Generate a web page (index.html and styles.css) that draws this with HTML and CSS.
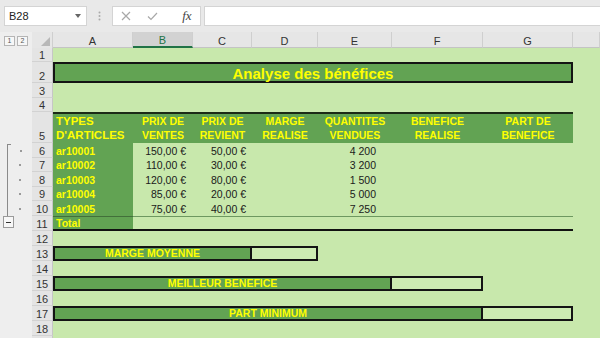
FILE: index.html
```html
<!DOCTYPE html>
<html lang="fr">
<head>
    <meta charset="UTF-8">
    <meta name="viewport" content="width=device-width, initial-scale=1.0">
    <title>Analyse des bénéfices</title>
    <link rel="stylesheet" href="styles.css">
</head>
<body>

    <div class="toolbar">
        <div class="namebox">
            <span>B28</span>
            <svg class="caret" width="6" height="4" viewBox="0 0 6 4"><path d="M0 0h6L3 4z" fill="#666"/></svg>
        </div>
        <div class="grip">
            <svg width="3" height="10" viewBox="0 0 3 10"><circle cx="1.5" cy="1.5" r="1" fill="#aaa"/><circle cx="1.5" cy="5" r="1" fill="#aaa"/><circle cx="1.5" cy="8.5" r="1" fill="#aaa"/></svg>
        </div>
        <div class="fbtns">
            <div class="slot"><svg width="10" height="10" viewBox="0 0 10 10"><path d="M1 1l8 8M9 1l-8 8" stroke="#a8a8a8" stroke-width="1.2"/></svg></div>
            <div class="slot"><svg width="11" height="9" viewBox="0 0 11 9"><path d="M1 4.5l3 3L10 1" stroke="#a8a8a8" stroke-width="1.2" fill="none"/></svg></div>
            <div class="slot fx">fx</div>
        </div>
        <div class="finput"></div>
    </div>

    <div class="sheet">
        <div class="row colhdr">
            <div class="levels"><span class="lvl">1</span><span class="lvl">2</span></div>
            <div class="corner"><span class="tri"></span></div>
            <div class="ch">A</div>
            <div class="ch sel">B</div>
            <div class="ch">C</div>
            <div class="ch">D</div>
            <div class="ch">E</div>
            <div class="ch">F</div>
            <div class="ch">G</div>
            <div class="ch"></div>
        </div>

        <div class="row h14"><div class="ol"></div><div class="rh">1</div></div>
        <div class="row h21">
            <div class="ol"></div><div class="rh">2</div>
            <div class="title">Analyse des bénéfices</div>
        </div>
        <div class="row h15"><div class="ol"></div><div class="rh">3</div></div>
        <div class="row h14"><div class="ol"></div><div class="rh">4</div></div>

        <div class="row h31">
            <div class="ol"></div><div class="rh">5</div>
            <div class="hd first">TYPES<br>D'ARTICLES</div>
            <div class="hd">PRIX DE<br>VENTES</div>
            <div class="hd">PRIX DE<br>REVIENT</div>
            <div class="hd">MARGE<br>REALISE</div>
            <div class="hd">QUANTITES<br>VENDUES</div>
            <div class="hd">BENEFICE<br>REALISE</div>
            <div class="hd">PART DE<br>BENEFICE</div>
        </div>

        <div class="row h15">
            <div class="ol grp"><span class="tick"></span><span class="dot"></span></div><div class="rh">6</div>
            <div class="code">ar10001</div><div class="num pb">150,00&nbsp;€</div><div class="num pc">50,00&nbsp;€</div><div></div><div class="num pe">4&nbsp;200</div>
        </div>
        <div class="row h14">
            <div class="ol grp"><span class="line"></span><span class="dot"></span></div><div class="rh">7</div>
            <div class="code">ar10002</div><div class="num pb">110,00&nbsp;€</div><div class="num pc">30,00&nbsp;€</div><div></div><div class="num pe">3&nbsp;200</div>
        </div>
        <div class="row h15">
            <div class="ol grp"><span class="line"></span><span class="dot"></span></div><div class="rh">8</div>
            <div class="code">ar10003</div><div class="num pb">120,00&nbsp;€</div><div class="num pc">80,00&nbsp;€</div><div></div><div class="num pe">1&nbsp;500</div>
        </div>
        <div class="row h14">
            <div class="ol grp"><span class="line"></span><span class="dot"></span></div><div class="rh">9</div>
            <div class="code">ar10004</div><div class="num pb">85,00&nbsp;€</div><div class="num pc">20,00&nbsp;€</div><div></div><div class="num pe">5&nbsp;000</div>
        </div>
        <div class="row h15">
            <div class="ol grp"><span class="line"></span><span class="dot"></span></div><div class="rh">10</div>
            <div class="code">ar10005</div><div class="num pb">75,00&nbsp;€</div><div class="num pc">40,00&nbsp;€</div><div></div><div class="num pe">7&nbsp;250</div>
        </div>
        <div class="row h15">
            <div class="ol"><span class="minus"></span></div><div class="rh">11</div>
            <div class="code total">Total</div>
            <div class="totrest"></div>
        </div>
        <div class="row h15"><div class="ol"></div><div class="rh">12</div></div>

        <div class="row h15">
            <div class="ol"></div><div class="rh">13</div>
            <div class="label span-ac">MARGE MOYENNE</div>
            <div class="box"></div>
        </div>
        <div class="row h15"><div class="ol"></div><div class="rh">14</div></div>
        <div class="row h15">
            <div class="ol"></div><div class="rh">15</div>
            <div class="label span-ae">MEILLEUR BENEFICE</div>
            <div class="box"></div>
        </div>
        <div class="row h15"><div class="ol"></div><div class="rh">16</div></div>
        <div class="row h15">
            <div class="ol"></div><div class="rh">17</div>
            <div class="label span-af">PART MINIMUM</div>
            <div class="box"></div>
        </div>
        <div class="row h15"><div class="ol"></div><div class="rh">18</div></div>
        <div class="row h15"><div class="ol"></div><div class="rh"></div></div>
    </div>

</body>
</html>
```

FILE: styles.css
```css
body {
    margin: 0;
    width: 600px;
    height: 338px;
    overflow: hidden;
    font-family: 'Liberation Sans', Arial, sans-serif;
    background-color: #c8e8ac;
}

/* formula bar */
.toolbar {
    display: flex;
    height: 32px;
    box-sizing: border-box;
    padding: 6px 0 0 4px;
    background-color: #e9e9e9;
}
.namebox {
    display: flex;
    align-items: center;
    justify-content: space-between;
    width: 83px;
    height: 20px;
    box-sizing: border-box;
    padding: 0 5px 0 4px;
    background-color: white;
    border: 1px solid #d4d4d4;
    font-size: 11px;
    color: #222;
}
.grip {
    display: flex;
    justify-content: center;
    align-items: center;
    width: 25px;
    height: 20px;
}
.fbtns {
    display: flex;
    width: 89px;
    height: 20px;
    box-sizing: border-box;
    background-color: white;
    border: 1px solid #d4d4d4;
    margin-right: 3px;
}
.slot {
    display: flex;
    align-items: center;
    justify-content: center;
    width: 28px;
}
.fx {
    padding-left: 8px;
    font-family: 'Liberation Serif', serif;
    font-style: italic;
    font-size: 13px;
    color: #444;
}
.finput {
    flex: 1;
    height: 20px;
    box-sizing: border-box;
    background-color: white;
    border: 1px solid #d4d4d4;
    border-right: none;
}

/* grid */
.row {
    display: grid;
    grid-template-columns: 32px 21px 80px 60px 59px 66px 74px 91px 90px 1fr;
}
.h14 { height: 14px; }
.h15 { height: 15px; }
.h21 { height: 21px; }
.h31 { height: 31px; }

.colhdr {
    height: 16px;
    background-color: #e6e6e6;
    font-size: 11px;
    color: #333;
}
.levels {
    display: flex;
    gap: 2px;
    padding: 4px 0 0 4px;
    background-color: #eeeeee;
}
.lvl {
    width: 11px;
    height: 10px;
    box-sizing: border-box;
    border: 1px solid #b5b5b5;
    background-color: #f7f7f7;
    font-size: 7px;
    line-height: 8px;
    text-align: center;
    color: #555;
}
.corner {
    display: flex;
    justify-content: flex-end;
    align-items: flex-end;
    padding: 0 2px 2px 0;
    border-right: 1px solid #cfcfcf;
}
.tri {
    width: 0;
    height: 0;
    border-left: 9px solid transparent;
    border-bottom: 9px solid #b8b8b8;
}
.ch {
    display: flex;
    justify-content: center;
    align-items: flex-end;
    line-height: 12px;
    border-right: 1px solid #cfcfcf;
    border-bottom: 1px solid #c4c4c4;
}
.ch.sel {
    background-color: #d2d2d2;
    color: #217346;
    border-bottom: 2px solid #217346;
}

.ol {
    display: flex;
    align-items: stretch;
    background-color: #eeeeee;
}
.rh {
    display: flex;
    justify-content: center;
    align-items: flex-end;
    line-height: 12px;
    font-size: 11px;
    color: #333;
    background-color: #e4e4e4;
    border-bottom: 1px solid #d2d2d2;
    border-right: 1px solid #c6c6c6;
    box-sizing: border-box;
}

/* outline group */
.line {
    width: 1px;
    margin-left: 7px;
    background-color: #8a8a8a;
}
.tick {
    width: 3px;
    margin: 1px 0 0 7px;
    border-left: 1px solid #8a8a8a;
    border-top: 1px solid #8a8a8a;
}
.dot {
    width: 2px;
    height: 2px;
    align-self: center;
    margin-left: 11px;
    background-color: #9a9a9a;
}
.grp .tick + .dot {
    margin-left: 9px;
}
.minus {
    position: relative;
    width: 11px;
    height: 12px;
    margin: 0 0 0 3px;
    box-sizing: border-box;
    border: 1px solid #9a9a9a;
    background-color: #f7f7f7;
}
.minus::after {
    content: "";
    position: absolute;
    left: 2px;
    right: 2px;
    top: 5px;
    height: 1px;
    background-color: #333;
}

/* cells */
.title {
    grid-column: 3 / 10;
    display: flex;
    justify-content: center;
    align-items: flex-end;
    line-height: 14px;
    background-color: #62a353;
    border: 2px solid #141414;
    color: #ffff00;
    font-weight: bold;
    font-size: 15px;
}
.hd {
    display: flex;
    flex-direction: column;
    justify-content: flex-end;
    align-items: center;
    text-align: center;
    padding-bottom: 1px;
    line-height: 14px;
    background-color: #62a353;
    border-top: 2px solid #1b2a16;
    color: #ffff00;
    font-weight: bold;
    font-size: 10.5px;
    white-space: nowrap;
}
.hd.first {
    align-items: flex-start;
    text-align: left;
    padding-left: 3px;
    font-size: 11.5px;
}
.code {
    display: flex;
    align-items: flex-end;
    padding-left: 3px;
    line-height: 14px;
    background-color: #62a353;
    color: #ffff00;
    font-weight: bold;
    font-size: 10.5px;
}
.num {
    display: flex;
    justify-content: flex-end;
    align-items: flex-end;
    line-height: 14px;
    font-size: 10.5px;
    color: #1a1a1a;
}
.pb { padding-right: 7px; }
.pc { padding-right: 6px; }
.pe { padding-right: 16px; }

.total {
    border-top: 1px solid #42703a;
    border-bottom: 2px solid #111;
    line-height: 12px;
}
.totrest {
    grid-column: 4 / 10;
    border-top: 1px solid #6d9860;
    border-bottom: 2px solid #111;
}

.label {
    display: flex;
    justify-content: center;
    align-items: flex-end;
    line-height: 11px;
    background-color: #62a353;
    border: 2px solid #141414;
    color: #ffff00;
    font-weight: bold;
    font-size: 10.5px;
}
.span-ac { grid-column: 3 / 6; }
.span-ae { grid-column: 3 / 8; }
.span-af { grid-column: 3 / 9; }
.box {
    border: 2px solid #141414;
    border-left: none;
    background-color: #cdecb2;
}
```
